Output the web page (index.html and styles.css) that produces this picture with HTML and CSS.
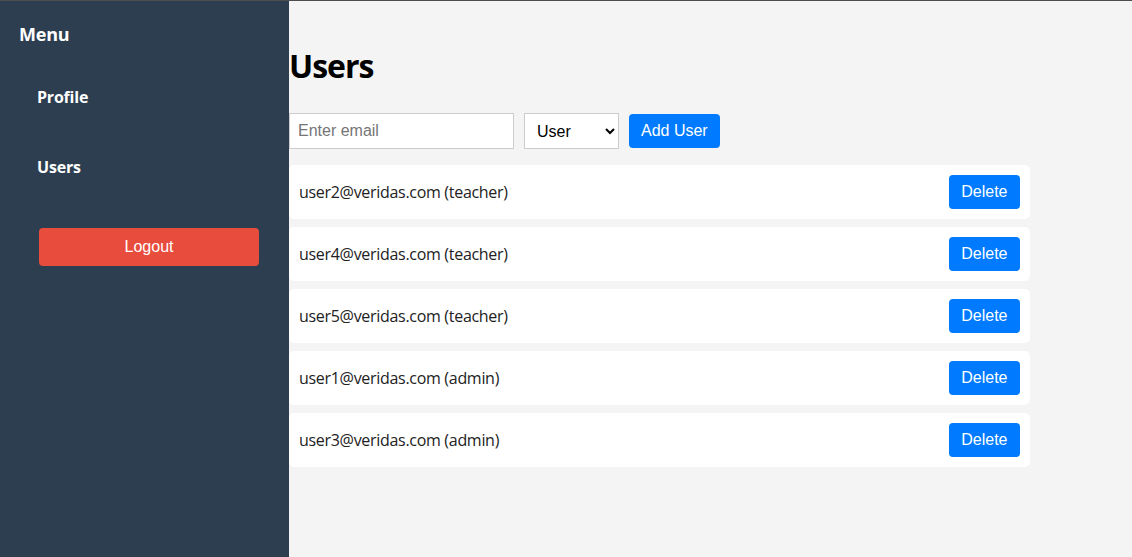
FILE: index.html
```html
<!DOCTYPE html>
<html>
<head>
<meta charset="utf-8">
<link rel="stylesheet" href="styles.css">
</head>
<body>
<div class="app">
  <aside class="sidebar">
    <h3 class="menu-title">Menu</h3>
    <ul class="menu">
      <li class="menu-item">Profile</li>
      <li class="menu-item">Users</li>
    </ul>
    <button class="logout">Logout</button>
  </aside>
  <main class="main">
    <h1 class="title">Users</h1>
    <div class="add-form">
      <input class="email" type="text" placeholder="Enter email">
      <select class="role">
        <option>User</option>
        <option>Teacher</option>
        <option>Admin</option>
      </select>
      <button class="btn">Add User</button>
    </div>
    <ul class="user-list">
      <li class="user-row"><span class="user-text">user2@veridas.com (teacher)</span><button class="btn btn-delete">Delete</button></li>
      <li class="user-row"><span class="user-text">user4@veridas.com (teacher)</span><button class="btn btn-delete">Delete</button></li>
      <li class="user-row"><span class="user-text">user5@veridas.com (teacher)</span><button class="btn btn-delete">Delete</button></li>
      <li class="user-row"><span class="user-text">user1@veridas.com (admin)</span><button class="btn btn-delete">Delete</button></li>
      <li class="user-row"><span class="user-text">user3@veridas.com (admin)</span><button class="btn btn-delete">Delete</button></li>
    </ul>
  </main>
</div>
</body>
</html>
```

FILE: styles.css
```css
* { box-sizing: border-box; }
html, body { margin: 0; padding: 0; }
body {
  font-family: "Open Sans", "Noto Sans", sans-serif;
  background: #f4f4f4;
  border-top: 1px solid #4d4d4d;
}
.app {
  display: flex;
  height: 556px;
}
.sidebar {
  width: 289px;
  flex: none;
  background: #2c3e50;
  color: #fff;
  padding: 0 30px 0 19px;
}
.menu-title {
  margin: 22px 0 0;
  font-size: 18px;
  font-weight: 700;
  line-height: 22px;
  letter-spacing: -0.2px;
}
.menu {
  list-style: none;
  margin: 0;
  padding: 0 0 0 18px;
}
.menu-item {
  font-size: 16px;
  font-weight: 700;
  line-height: 22px;
  margin-top: 48px;
  letter-spacing: -0.2px;
}
.menu-item:first-child { margin-top: 41px; }
.logout {
  display: block;
  margin: 50px 0 0 20px;
  width: 220px;
  height: 38px;
  border: none;
  border-radius: 4px;
  background: #e74c3c;
  color: #fff;
  font-family: "Liberation Sans", Arial, sans-serif;
  font-size: 16px;
}
.main {
  flex: 1;
  padding: 0;
}
.title {
  margin: 45px 0 0;
  font-size: 32px;
  font-weight: 700;
  line-height: 40px;
  letter-spacing: -1px;
  color: #000;
}
.add-form {
  display: flex;
  align-items: center;
  gap: 10px;
  margin-top: 27px;
}
.email {
  width: 225px;
  height: 36px;
  padding: 8px;
  border: 1px solid #ccc;
  background: #fff;
  font-family: "Liberation Sans", Arial, sans-serif;
  font-size: 16px;
  color: #000;
}
.email::placeholder { color: #757575; }
.role {
  width: 95px;
  height: 36px;
  padding: 0 8px;
  border: 1px solid #ccc;
  border-radius: 0;
  background: #fff;
  font-family: "Liberation Sans", Arial, sans-serif;
  font-size: 16px;
  color: #000;
}
.btn {
  height: 34px;
  padding: 0 12px;
  border: none;
  border-radius: 4px;
  background: #007bff;
  color: #fff;
  font-family: "Liberation Sans", Arial, sans-serif;
  font-size: 16px;
}
.btn-delete { padding: 0 12.5px; }
.user-list {
  list-style: none;
  margin: 16px 0 0;
  padding: 0;
  width: 741px;
}
.user-row {
  display: flex;
  align-items: center;
  justify-content: space-between;
  background: #fff;
  border-radius: 5px;
  padding: 10px;
  margin-bottom: 8px;
}
.user-text {
  font-size: 16px;
  letter-spacing: -0.3px;
  color: #222;
}
```
